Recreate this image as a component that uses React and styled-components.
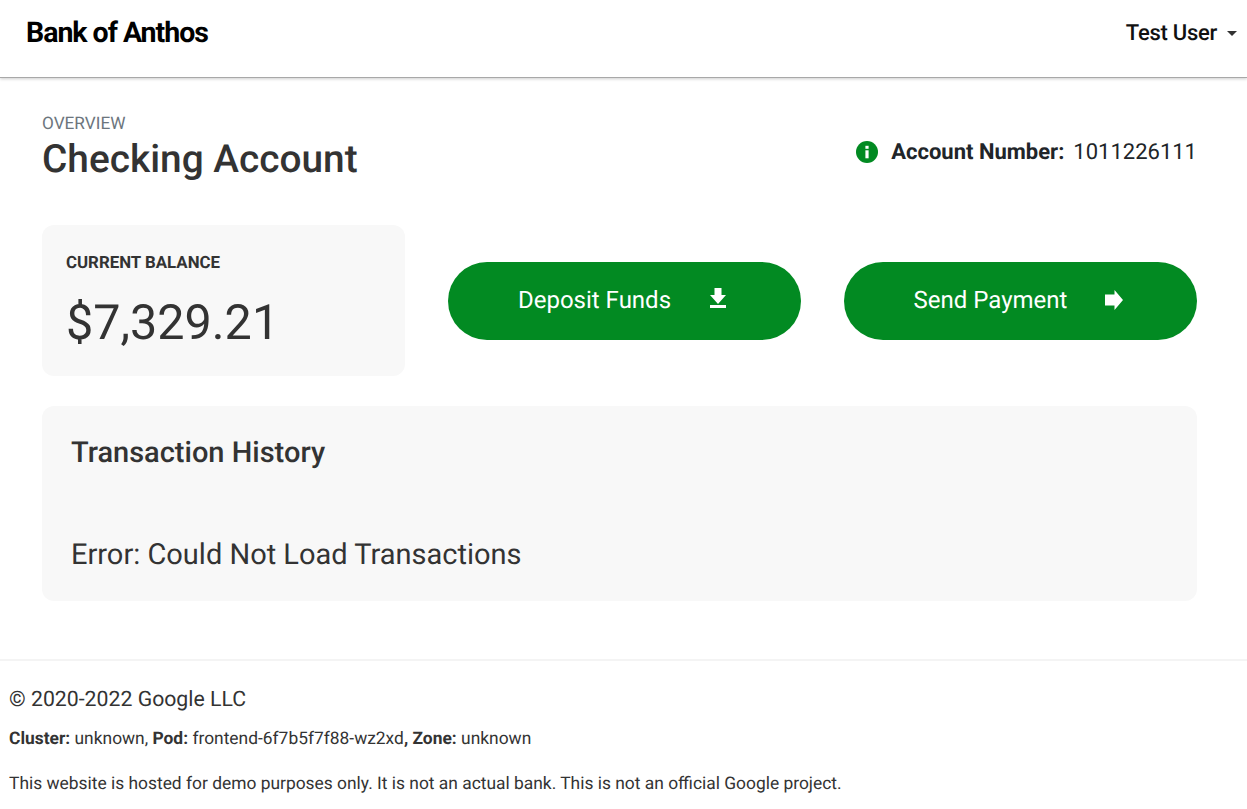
import React from "react";
import styled, { createGlobalStyle } from "styled-components";

const Global = createGlobalStyle`
  html, body { margin: 0; padding: 0; background: #fff; }
  body {
    font-family: Roboto, "Liberation Sans", sans-serif;
    color: #333;
    text-rendering: geometricPrecision;
  }
  * { box-sizing: border-box; }
`;

const Header = styled.header`
  height: 78px;
  display: flex;
  justify-content: space-between;
  padding: 0 10px 0 26px;
  border-bottom: 1px solid #a8a8a8;
  box-shadow: 0 1px 3px rgba(0, 0, 0, 0.2);
`;
const Brand = styled.div`
  font-size: 28.5px;
  font-weight: 700;
  letter-spacing: -1.02px;
  color: #000;
  line-height: 33px;
  padding-top: 16px;
`;
const UserMenu = styled.div`
  display: flex;
  align-items: center;
  height: 66px;
  gap: 10px;
  font-size: 22px;
  font-weight: 500;
  letter-spacing: -0.27px;
  color: #111;
`;
const Caret = styled.span`
  width: 0;
  height: 0;
  border-left: 5px solid transparent;
  border-right: 5px solid transparent;
  border-top: 5px solid #333;
`;
const Main = styled.main`
  padding: 0 50px 0 42px;
`;
const TitleRow = styled.div`
  display: flex;
  justify-content: space-between;
  align-items: flex-start;
  padding-top: 36px;
`;
const TitleBlock = styled.div``;
const Overline = styled.div`
  font-size: 17.2px;
  line-height: 20px;
  color: #6c757d;
`;
const Title = styled.h1`
  margin: 1px 0 0;
  font-size: 38.8px;
  line-height: 50px;
  font-weight: 500;
  color: #333;
`;
const AccountInfo = styled.div`
  display: flex;
  align-items: center;
  margin-top: 23px;
  height: 30px;
  font-size: 22px;
  color: #212529;
`;
const AccountLabel = styled.strong`
  font-weight: 700;
  margin: 0 9px 0 13px;
`;
const ActionRow = styled.div`
  display: flex;
  align-items: center;
  justify-content: space-between;
  margin-top: 40px;
`;
const BalanceCard = styled.div`
  width: 363px;
  height: 151px;
  background: #f8f8f8;
  border-radius: 12px;
  padding: 28px 24px;
`;
const BalanceLabel = styled.div`
  font-size: 16.85px;
  line-height: 20px;
  font-weight: 700;
  color: #333;
`;
const BalanceValue = styled.div`
  font-size: 48.5px;
  line-height: 56px;
  margin-top: 22px;
  color: #333;
`;
const ActionButton = styled.button`
  width: 353px;
  height: 78px;
  border: 0;
  border-radius: 39px;
  background: #028a22;
  color: #fff;
  font: 400 24px Roboto, sans-serif;
  text-rendering: geometricPrecision;
  display: flex;
  align-items: center;
  justify-content: center;
  gap: 38px;
  padding: 0 4px 2px 0;
`;
const HistoryCard = styled.section`
  height: 195px;
  margin-top: 30px;
  background: #f8f8f8;
  border-radius: 12px;
  padding: 28px 29px;
`;
const HistoryTitle = styled.h2`
  margin: 0;
  font-size: 29px;
  line-height: 38px;
  font-weight: 500;
  color: #333;
`;
const HistoryError = styled.div`
  margin-top: 65px;
  font-size: 29px;
  line-height: 36px;
  color: #333;
`;
const Footer = styled.footer`
  margin-top: 58px;
  border-top: 2px solid #f4f4f4;
  padding: 27px 9px 0;
  color: #333;
`;
const Copyright = styled.div`
  font-size: 21.25px;
  line-height: 24px;
`;
const Meta = styled.div`
  font-size: 17.4px;
  line-height: 22px;
  margin-top: ${(p) => p.$gap}px;
  strong { font-weight: 700; }
`;
const RaisedSvg = styled.svg`
  margin-bottom: ${(p) => p.$lift || 0}px;
  flex: none;
`;

const InfoIcon = () => (
  <RaisedSvg width="22" height="22" viewBox="0 0 22 22">
    <circle cx="11" cy="11" r="11" fill="#028a22" />
    <rect x="9.4" y="9.3" width="3.2" height="8" fill="#fff" />
    <rect x="9.4" y="4.8" width="3.2" height="3" fill="#fff" />
  </RaisedSvg>
);
const DownloadIcon = () => (
  <RaisedSvg width="18" height="20" viewBox="-1 0 18 20" $lift={4}>
    <path d="M4.5 0h7v7H16l-8 9-8-9h4.5z" fill="#fff" />
    <rect x="0" y="17" width="16" height="3" fill="#fff" />
  </RaisedSvg>
);
const ArrowIcon = () => (
  <RaisedSvg width="18" height="20" viewBox="0 0 18 20">
    <path d="M0 4.5h9.5V0L18 10 9.5 20v-4.5H0z" fill="#fff" />
  </RaisedSvg>
);

export default function App() {
  return (
    <>
      <Global />
      <Header>
        <Brand>Bank of Anthos</Brand>
        <UserMenu>
          Test User
          <Caret />
        </UserMenu>
      </Header>
      <Main>
        <TitleRow>
          <TitleBlock>
            <Overline>OVERVIEW</Overline>
            <Title>Checking Account</Title>
          </TitleBlock>
          <AccountInfo>
            <InfoIcon />
            <AccountLabel>Account Number:</AccountLabel>
            1011226111
          </AccountInfo>
        </TitleRow>
        <ActionRow>
          <BalanceCard>
            <BalanceLabel>CURRENT BALANCE</BalanceLabel>
            <BalanceValue>$7,329.21</BalanceValue>
          </BalanceCard>
          <ActionButton>
            Deposit Funds
            <DownloadIcon />
          </ActionButton>
          <ActionButton>
            Send Payment
            <ArrowIcon />
          </ActionButton>
        </ActionRow>
        <HistoryCard>
          <HistoryTitle>Transaction History</HistoryTitle>
          <HistoryError>Error: Could Not Load Transactions</HistoryError>
        </HistoryCard>
      </Main>
      <Footer>
        <Copyright>© 2020-2022 Google LLC</Copyright>
        <Meta $gap={16}>
          <strong>Cluster:</strong> unknown, <strong>Pod:</strong> frontend-6f7b5f7f88-wz2xd<strong>, Zone:</strong> unknown
        </Meta>
        <Meta $gap={23}>
          This website is hosted for demo purposes only. It is not an actual bank. This is not an official Google project.
        </Meta>
      </Footer>
    </>
  );
}
